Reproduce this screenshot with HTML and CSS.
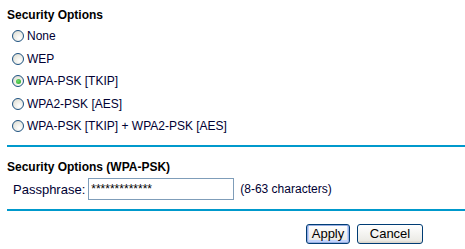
FILE: index.html
```html
<!DOCTYPE html>
<html lang="en">
<head>
  <meta charset="UTF-8" />
  <title>Wireless Settings</title>
  <link rel="stylesheet" href="styles.css">
</head>
<body>
  <form id="formSecurity">
    <!-- Security type -->
    <section class="block">
      <h2>Security Options</h2>
      <label class="opt"><input type="radio" name="sec" value="none" /> None</label>
      <label class="opt"><input type="radio" name="sec" value="wep" /> WEP</label>
      <label class="opt"><input type="radio" name="sec" value="wpa" checked /> WPA-PSK [TKIP]</label>
      <label class="opt"><input type="radio" name="sec" value="wpa2" /> WPA2-PSK [AES]</label>
      <label class="opt"><input type="radio" name="sec" value="mixed" /> WPA-PSK [TKIP] + WPA2-PSK [AES]</label>
    </section>

    <hr class="sep" />

    <!-- Passphrase -->
    <section class="block second">
      <h2>Security Options (WPA-PSK)</h2>
      <div class="row">
        <label for="pass">Passphrase:</label>
        <input type="text" id="pass" class="txt" value="*************" />
        <span class="hint">(8-63 characters)</span>
      </div>
    </section>

    <hr class="sep" />

    <div class="buttons">
      <button type="submit" class="btn default">Apply</button>
      <button type="button" class="btn cancel">Cancel</button>
    </div>
  </form>
</body>
</html>
```

FILE: styles.css
```css
body { font-family: "Liberation Sans", Arial, sans-serif; font-size: 12px; color: #000033; margin: 0; padding: 0 0 0 7px; background: #fff; }
h2 { font-size: 12px; font-weight: bold; color: #000; margin: 0 0 2px 0; line-height: 16px; }
.block { padding-top: 7px; }
.block.second { padding-top: 12px; }
.opt { display: flex; align-items: center; gap: 3px; height: 22.5px; padding-left: 5px; }
.opt input { appearance: none; width: 12px; height: 12px; margin: 0; border: 1px solid #1c5180; border-radius: 50%; background: radial-gradient(circle at 65% 70%, #fff 0, #e8e8e0 60%, #d4d4cc 100%); position: relative; }
.opt input:checked::after { content: ""; position: absolute; left: 2.5px; top: 2.5px; width: 5px; height: 5px; border-radius: 50%; background: radial-gradient(circle at 40% 40%, #6fdf6f, #21a121); }
.sep { border: 0; border-top: 2px solid #0099cc; margin: 7px 0 0 0; }
.row { display: flex; align-items: center; height: 25px; padding-left: 6px; font-size: 13px; }
.row label { margin-right: 3px; }
.txt { width: 146px; height: 22px; box-sizing: border-box; border: 1px solid #7f9db9; padding: 0 2px; font: inherit; font-size: 12px; color: #000; margin: 0; }
.hint { margin-left: 6px; font-size: 12px; }
.buttons { display: flex; justify-content: flex-end; gap: 7px; padding: 13px 42px 0 0; }
.btn { font: inherit; font-size: 13px; color: #000; height: 20px; padding: 0; border: 1px solid #003c74; border-radius: 3px; background: linear-gradient(#ffffff, #ecebe6 85%, #d6d0c5); }
.btn.default { width: 44px; box-shadow: inset 0 0 0 1px #97aee2, inset 0 -1px 0 2px #c2d3fc; }
.btn.cancel { width: 66px; }
```
